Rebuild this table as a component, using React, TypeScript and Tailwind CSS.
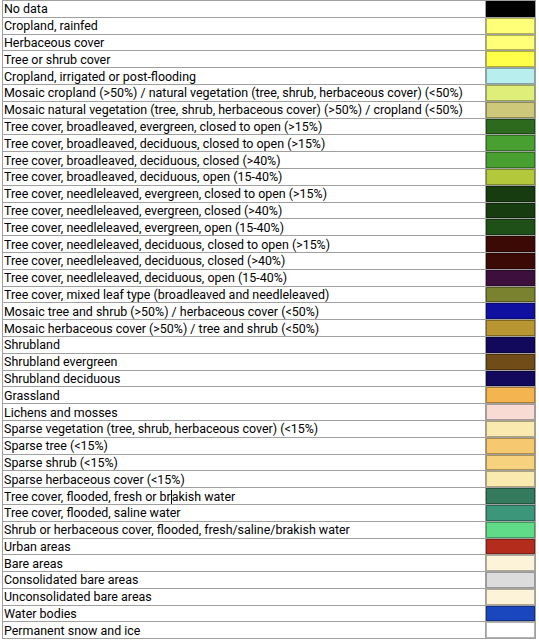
import React from "react";

interface LegendItem {
  label: React.ReactNode;
  color: string;
}

const caret = <span className="inline-block w-px h-[14px] bg-black align-[-3px]" />;

const items: LegendItem[] = [
  { label: "No data", color: "bg-[#000000]" },
  { label: "Cropland, rainfed", color: "bg-[#ffff78]" },
  { label: "Herbaceous cover", color: "bg-[#ffff78]" },
  { label: "Tree or shrub cover", color: "bg-[#ffff4a]" },
  { label: "Cropland, irrigated or post-flooding", color: "bg-[#b8eeee]" },
  {
    label: "Mosaic cropland (>50%) / natural vegetation (tree, shrub, herbaceous cover) (<50%)",
    color: "bg-[#dfee78]",
  },
  {
    label: "Mosaic natural vegetation (tree, shrub, herbaceous cover) (>50%) / cropland (<50%)",
    color: "bg-[#cdc87a]",
  },
  { label: "Tree cover, broadleaved, evergreen, closed to open (>15%)", color: "bg-[#2e6a1e]" },
  { label: "Tree cover, broadleaved, deciduous, closed to open (>15%)", color: "bg-[#48a030]" },
  { label: "Tree cover, broadleaved, deciduous, closed (>40%)", color: "bg-[#48a030]" },
  { label: "Tree cover, broadleaved, deciduous, open (15-40%)", color: "bg-[#b4c83c]" },
  { label: "Tree cover, needleleaved, evergreen, closed to open (>15%)", color: "bg-[#173c10]" },
  { label: "Tree cover, needleleaved, evergreen, closed (>40%)", color: "bg-[#173c10]" },
  { label: "Tree cover, needleleaved, evergreen, open (15-40%)", color: "bg-[#1f5018]" },
  { label: "Tree cover, needleleaved, deciduous, closed to open (>15%)", color: "bg-[#3c0a05]" },
  { label: "Tree cover, needleleaved, deciduous, closed (>40%)", color: "bg-[#3c0a05]" },
  { label: "Tree cover, needleleaved, deciduous, open (15-40%)", color: "bg-[#3c0f3c]" },
  { label: "Tree cover, mixed leaf type (broadleaved and needleleaved)", color: "bg-[#7a8230]" },
  { label: "Mosaic tree and shrub (>50%) / herbaceous cover (<50%)", color: "bg-[#1010a0]" },
  { label: "Mosaic herbaceous cover (>50%) / tree and shrub (<50%)", color: "bg-[#b89632]" },
  { label: "Shrubland", color: "bg-[#12085c]" },
  { label: "Shrubland evergreen", color: "bg-[#704c18]" },
  { label: "Shrubland deciduous", color: "bg-[#12085c]" },
  { label: "Grassland", color: "bg-[#f4b450]" },
  { label: "Lichens and mosses", color: "bg-[#f8dcd4]" },
  { label: "Sparse vegetation (tree, shrub, herbaceous cover) (<15%)", color: "bg-[#fbeab0]" },
  { label: "Sparse tree (<15%)", color: "bg-[#f6c870]" },
  { label: "Sparse shrub (<15%)", color: "bg-[#f6d27e]" },
  { label: "Sparse herbaceous cover (<15%)", color: "bg-[#fbeab0]" },
  {
    label: (
      <>
        Tree cover, flooded, fresh or br{caret}akish water
      </>
    ),
    color: "bg-[#347a5c]",
  },
  { label: "Tree cover, flooded, saline water", color: "bg-[#3c967a]" },
  { label: "Shrub or herbaceous cover, flooded, fresh/saline/brakish water", color: "bg-[#60dc88]" },
  { label: "Urban areas", color: "bg-[#b42d1c]" },
  { label: "Bare areas", color: "bg-[#fdf3d8]" },
  { label: "Consolidated bare areas", color: "bg-[#dcdcdc]" },
  { label: "Unconsolidated bare areas", color: "bg-[#fdf3d8]" },
  { label: "Water bodies", color: "bg-[#1a46be]" },
  { label: "Permanent snow and ice", color: "bg-[#ffffff]" },
];

const App: React.FC = () => {
  return (
    <div className="w-[539px] h-[640px] bg-white overflow-hidden pl-[2px]">
      <table
        className="w-[534px] border-collapse text-[12.45px] text-black"
        style={{ fontFamily: "Roboto, 'Open Sans', sans-serif" }}
      >
        <tbody>
          {items.map((item, index) => (
            <tr key={index} className="h-[16.8px]">
              <td className="border border-[#a0a0a0] px-[1px] py-0 leading-[15px] whitespace-nowrap">
                {item.label}
              </td>
              <td className="w-[50px] border border-[#a0a0a0] p-0">
                <div className={`h-[15.8px] w-full border border-black/30 ${item.color}`} />
              </td>
            </tr>
          ))}
        </tbody>
      </table>
    </div>
  );
};

export default App;
